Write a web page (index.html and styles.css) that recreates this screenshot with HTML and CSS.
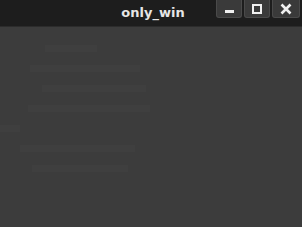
FILE: index.html
```html
<!DOCTYPE html>
<html lang="en">
<head>
  <meta charset="UTF-8" />
  <title>only_win</title>
  <link rel="stylesheet" href="styles.css">
</head>
<body>
  <div class="window">
    <div class="titlebar">
      <div class="title">only_win</div>
      <div class="controls">
        <div class="ctl"><span class="icon-min"></span></div>
        <div class="ctl"><span class="icon-max"></span></div>
        <div class="ctl ctl-close">
          <svg width="12" height="12" viewBox="0 0 12 12">
            <path d="M1.5 1.5 L10.5 10.5 M10.5 1.5 L1.5 10.5" stroke="#f0f0f0" stroke-width="2.6" stroke-linecap="butt" />
          </svg>
        </div>
      </div>
    </div>
    <div class="content">
      <div class="ghost g1"></div>
      <div class="ghost g2"></div>
      <div class="ghost g3"></div>
      <div class="ghost g4"></div>
      <div class="ghost g5"></div>
      <div class="ghost g6"></div>
      <div class="ghost g7"></div>
    </div>
  </div>
</body>
</html>
```

FILE: styles.css
```css
body {
  margin: 0;
  background-color: #3c3c3c;
  font-family: "DejaVu Sans", sans-serif;
}
.window {
  width: 302px;
  height: 227px;
  display: flex;
  flex-direction: column;
  overflow: hidden;
}
.titlebar {
  height: 26px;
  background-color: #1d1d1d;
  border-bottom: 1px solid #2c2c2c;
  position: relative;
  flex-shrink: 0;
}
.title {
  text-align: center;
  padding-left: 4px;
  line-height: 25px;
  font-size: 13px;
  font-weight: bold;
  color: #e6e6e6;
}
.controls {
  position: absolute;
  top: 0;
  right: 2px;
  display: flex;
  gap: 2px;
}
.ctl {
  width: 24px;
  height: 17px;
  background-color: #3a3a3a;
  border: 1px solid #4a4a4a;
  border-top: none;
  border-radius: 0 0 3px 3px;
  display: flex;
  align-items: center;
  justify-content: center;
}
.ctl-close {
  width: 26px;
}
.icon-min {
  width: 9px;
  height: 3px;
  background-color: #f0f0f0;
  margin-top: 6px;
}
.icon-max {
  width: 6px;
  height: 6px;
  border: 2px solid #f0f0f0;
}
.content {
  flex: 1;
  background-color: #3c3c3c;
  padding-top: 18px;
  display: flex;
  flex-direction: column;
  gap: 13px;
}
.ghost {
  height: 7px;
  background-color: #3f3f3f;
}
.g1 { width: 52px; margin-left: 45px; }
.g2 { width: 110px; margin-left: 30px; }
.g3 { width: 104px; margin-left: 42px; }
.g4 { width: 122px; margin-left: 28px; }
.g5 { width: 20px; margin-left: 0; }
.g6 { width: 115px; margin-left: 20px; }
.g7 { width: 96px; margin-left: 32px; }
```
